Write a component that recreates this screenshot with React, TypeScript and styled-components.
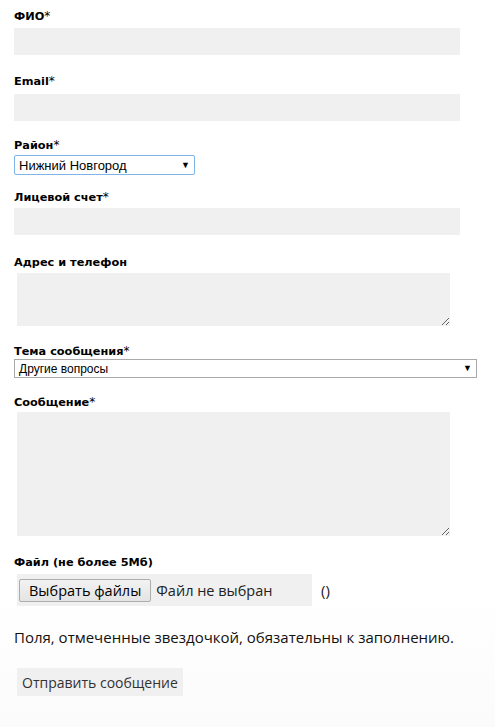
import React from 'react';
import styled, { createGlobalStyle } from 'styled-components';

const GlobalStyle = createGlobalStyle`
  html, body {
    margin: 0;
    padding: 0;
    background: #ffffff;
  }
  body {
    font-family: "Liberation Sans", Arial, sans-serif;
    color: #000;
  }
`;

const Form = styled.form`
  display: flex;
  flex-direction: column;
  align-items: flex-start;
  padding: 9px 0 30px 14px;
  background: linear-gradient(to bottom, #ffffff 0, #ffffff 590px, #fbfbfb 727px);
  min-height: 727px;
  box-sizing: border-box;
`;

const Label = styled.label<{ $top: number; $gap: number }>`
  display: block;
  margin-top: ${(p) => p.$top}px;
  margin-bottom: ${(p) => p.$gap}px;
  font-family: "DejaVu Sans", Verdana, sans-serif;
  font-weight: bold;
  font-size: 11.3px;
  line-height: 15px;
  color: #000;
`;

const Star = styled.span`
  font-weight: normal;
  font-size: 12px;
`;

const Input = styled.input`
  width: 446px;
  height: 27px;
  box-sizing: border-box;
  border: none;
  background: #f0f0f0;
  padding: 0 6px;
  outline: none;
`;

const TextArea = styled.textarea<{ $height: number }>`
  width: 433px;
  height: ${(p) => p.$height}px;
  margin-left: 3px;
  box-sizing: border-box;
  border: none;
  background: #f0f0f0;
  outline: none;
  resize: both;
  display: block;
`;

const SelectBox = styled.div<{ $width: number; $focused?: boolean }>`
  display: flex;
  align-items: center;
  justify-content: space-between;
  width: ${(p) => p.$width}px;
  height: ${(p) => (p.$focused ? 20 : 19)}px;
  box-sizing: border-box;
  padding: 0 4px 0 4px;
  border: 1px solid ${(p) => (p.$focused ? '#7eb4ea' : '#a9a9a9')};
  border-radius: ${(p) => (p.$focused ? 2 : 0)}px;
  font-family: "Liberation Sans", Arial, sans-serif;
  font-size: ${(p) => (p.$focused ? 13 : 12)}px;
  color: #000;
  background: #fff;
`;

const Arrow = styled.span`
  font-size: 9px;
  line-height: 1;
`;

const FileRow = styled.div`
  display: flex;
  align-items: center;
  gap: 9px;
  margin-left: 3px;
`;

const FileBox = styled.div`
  display: flex;
  align-items: center;
  width: 295px;
  height: 32px;
  box-sizing: border-box;
  padding: 0 6px 0 2px;
  background: #f0f0f0;
  font-family: "Open Sans", "Noto Sans", sans-serif;
  font-size: 14.5px;
  color: #222;
`;

const ChooseButton = styled.button`
  height: 23px;
  padding: 0 9px;
  margin-right: 5px;
  border: 1px solid #adadad;
  border-radius: 2px;
  background: linear-gradient(#f2f2f2, #e4e4e4);
  font-family: "Open Sans", "Noto Sans", sans-serif;
  font-size: 14.5px;
  color: #000;
`;

const Parens = styled.span`
  font-family: "Open Sans", "Noto Sans", sans-serif;
  font-size: 15px;
  color: #222;
`;

const Note = styled.p`
  margin: 21px 0 0 0;
  font-family: "Open Sans", "Noto Sans", sans-serif;
  font-size: 15px;
  line-height: 20px;
  color: #111;
`;

const Submit = styled.button`
  margin: 21px 0 0 3px;
  height: 28px;
  padding: 0 5px;
  border: none;
  background: #f0f0f0;
  font-family: "Open Sans", "Noto Sans", sans-serif;
  font-size: 14px;
  color: #333;
`;

export default function App() {
  return (
    <>
      <GlobalStyle />
      <Form>
        <Label $top={0} $gap={4}>ФИО<Star>*</Star></Label>
        <Input type="text" />

        <Label $top={19} $gap={5}>Email<Star>*</Star></Label>
        <Input type="text" />

        <Label $top={17} $gap={2}>Район<Star>*</Star></Label>
        <SelectBox $width={181} $focused>
          <span>Нижний Новгород</span>
          <Arrow>▼</Arrow>
        </SelectBox>

        <Label $top={15} $gap={3}>Лицевой счет<Star>*</Star></Label>
        <Input type="text" />

        <Label $top={20} $gap={3}>Адрес и телефон</Label>
        <TextArea $height={53} />

        <Label $top={18} $gap={0}>Тема сообщения<Star>*</Star></Label>
        <SelectBox $width={463}>
          <span>Другие вопросы</span>
          <Arrow>▼</Arrow>
        </SelectBox>

        <Label $top={17} $gap={2}>Сообщение<Star>*</Star></Label>
        <TextArea $height={124} />

        <Label $top={19} $gap={4}>Файл (не более 5Мб)</Label>
        <FileRow>
          <FileBox>
            <ChooseButton type="button">Выбрать файлы</ChooseButton>
            <span>Файл не выбран</span>
          </FileBox>
          <Parens>()</Parens>
        </FileRow>

        <Note>Поля, отмеченные звездочкой, обязательны к заполнению.</Note>

        <Submit type="button">Отправить сообщение</Submit>
      </Form>
    </>
  );
}
